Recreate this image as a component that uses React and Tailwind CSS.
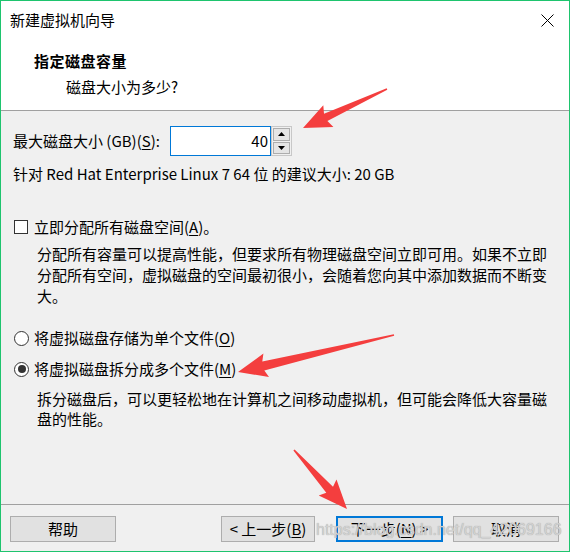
import React from "react";

function arrowPoints(T, P, L, W, w1, w0) {
  const dx = P[0] - T[0];
  const dy = P[1] - T[1];
  const len = Math.hypot(dx, dy);
  const d = [dx / len, dy / len];
  const n = [-d[1], d[0]];
  const B = [P[0] - d[0] * L, P[1] - d[1] * L];
  const pts = [
    [T[0] + n[0] * w0, T[1] + n[1] * w0],
    [B[0] + n[0] * w1, B[1] + n[1] * w1],
    [B[0] + n[0] * W - d[0] * 3, B[1] + n[1] * W - d[1] * 3],
    P,
    [B[0] - n[0] * W - d[0] * 3, B[1] - n[1] * W - d[1] * 3],
    [B[0] - n[0] * w1, B[1] - n[1] * w1],
    [T[0] - n[0] * w0, T[1] - n[1] * w0],
  ];
  return pts.map((p) => p[0].toFixed(1) + "," + p[1].toFixed(1)).join(" ");
}

const U = ({ children }) => <span className="underline underline-offset-2">{children}</span>;

function Checkbox() {
  return <div className="w-[14px] h-[14px] border border-[#333] bg-white shrink-0" />;
}

function Radio({ checked }) {
  return (
    <div className="w-[15px] h-[15px] rounded-full border border-[#333] bg-white shrink-0 flex items-center justify-center">
      {checked && <div className="w-[8px] h-[8px] rounded-full bg-[#333]" />}
    </div>
  );
}

function Btn({ children, w, primary }) {
  return (
    <div
      className={
        "h-[26px] flex items-center justify-center bg-[#e1e1e1] " +
        (primary ? "border-2 border-[#0078d7]" : "border border-[#adadad]")
      }
      style={{ width: w }}
    >
      {children}
    </div>
  );
}

export default function App() {
  return (
    <div className="w-[570px] h-[552px] border border-[#1ec46e] bg-[#f0f0f0] relative flex flex-col text-[15px] text-black font-['Noto_Sans_CJK_SC','Noto_Sans',sans-serif] leading-[20px] overflow-hidden">
      {/* white header */}
      <div className="h-[110px] bg-white border-b border-[#a0a0a0] shrink-0">
        <div className="h-[38px] flex items-center justify-between pl-[9px] pr-[15px]">
          <span>新建虚拟机向导</span>
          <svg width="13" height="13" viewBox="0 0 13 13">
            <path d="M0.5 0.5 L12.5 12.5 M12.5 0.5 L0.5 12.5" stroke="#000" strokeWidth="1" />
          </svg>
        </div>
        <div className="mt-[12px] pl-[33px] font-bold tracking-[0.5px]">指定磁盘容量</div>
        <div className="mt-[6px] pl-[65px]">磁盘大小为多少?</div>
      </div>

      {/* body */}
      <div className="flex flex-col pl-[12px]">
        <div className="mt-[15px] h-[30px] flex items-center">
          <span className="w-[157px] shrink-0">
            最大磁盘大小 (GB)(<U>S</U>):
          </span>
          <div className="w-[101px] h-[30px] border border-[#0078d7] bg-white flex items-center justify-end pr-[2px]">
            40
          </div>
          <div className="w-[21px] h-[30px] flex flex-col gap-[1px] p-[1px] border border-[#c8c8c8] bg-[#f0f0f0]">
            <div className="flex-1 border border-[#adadad] bg-[#e5e5e5] flex items-center justify-center">
              <svg width="7" height="4" viewBox="0 0 7 4"><path d="M0 4 L3.5 0 L7 4 Z" fill="#000" /></svg>
            </div>
            <div className="flex-1 border border-[#adadad] bg-[#e5e5e5] flex items-center justify-center">
              <svg width="7" height="4" viewBox="0 0 7 4"><path d="M0 0 L3.5 4 L7 0 Z" fill="#000" /></svg>
            </div>
          </div>
        </div>
        <div className="mt-[8px] h-[20px] flex items-center">
          针对 Red Hat Enterprise Linux 7 64 位 的建议大小: 20 GB
        </div>

        <div className="mt-[33px] h-[20px] flex items-center gap-[6px] ml-[1px]">
          <Checkbox />
          <span>
            立即分配所有磁盘空间(<U>A</U>)。
          </span>
        </div>
        <div className="mt-[6px] ml-[24px] leading-[21px]">
          <div>分配所有容量可以提高性能，但要求所有物理磁盘空间立即可用。如果不立即</div>
          <div>分配所有空间，虚拟磁盘的空间最初很小，会随着您向其中添加数据而不断变</div>
          <div>大。</div>
        </div>

        <div className="mt-[22px] h-[20px] flex items-center gap-[5px] ml-[1px]">
          <Radio />
          <span>
            将虚拟磁盘存储为单个文件(<U>O</U>)
          </span>
        </div>
        <div className="mt-[11px] h-[20px] flex items-center gap-[5px] ml-[1px]">
          <Radio checked />
          <span>
            将虚拟磁盘拆分成多个文件(<U>M</U>)
          </span>
        </div>
        <div className="mt-[10px] ml-[24px] leading-[20px]">
          <div>拆分磁盘后，可以更轻松地在计算机之间移动虚拟机，但可能会降低大容量磁</div>
          <div>盘的性能。</div>
        </div>
      </div>

      {/* footer */}
      <div className="mt-auto border-t border-[#a0a0a0] pt-[11px] pb-[9px] pl-[9px] pr-[10px] flex items-center">
        <Btn w={106}>帮助</Btn>
        <div className="ml-auto flex items-center">
          <Btn w={94}>
            &lt; 上一步(<U>B</U>)
          </Btn>
          <div className="ml-[21px]">
            <Btn w={107} primary>
              下一步(<U>N</U>) &gt;
            </Btn>
          </div>
          <div className="ml-[10px]">
            <Btn w={106}>取消</Btn>
          </div>
        </div>
      </div>

      {/* watermark */}
      <div className="absolute left-[315px] top-[520px] text-[16px] leading-[18px] font-['Liberation_Sans',Arial,sans-serif] text-[#d2d2d2] [text-shadow:0_0_1px_#9a9a9a] pointer-events-none whitespace-nowrap">
        https://blog.csdn.net/qq_42069166
      </div>

      {/* red arrows */}
      <svg className="absolute left-[-1px] top-[-1px] pointer-events-none" width="570" height="552">
        <polygon points={arrowPoints([387, 89], [303, 128], 25, 12, 4, 0.8)} fill="#f43e3e" />
        <polygon points={arrowPoints([394, 335], [238, 372], 26, 12, 4.5, 0.8)} fill="#f43e3e" />
        <polygon points={arrowPoints([294, 450], [347, 509], 26, 12, 4.5, 0.8)} fill="#f43e3e" />
      </svg>
    </div>
  );
}
